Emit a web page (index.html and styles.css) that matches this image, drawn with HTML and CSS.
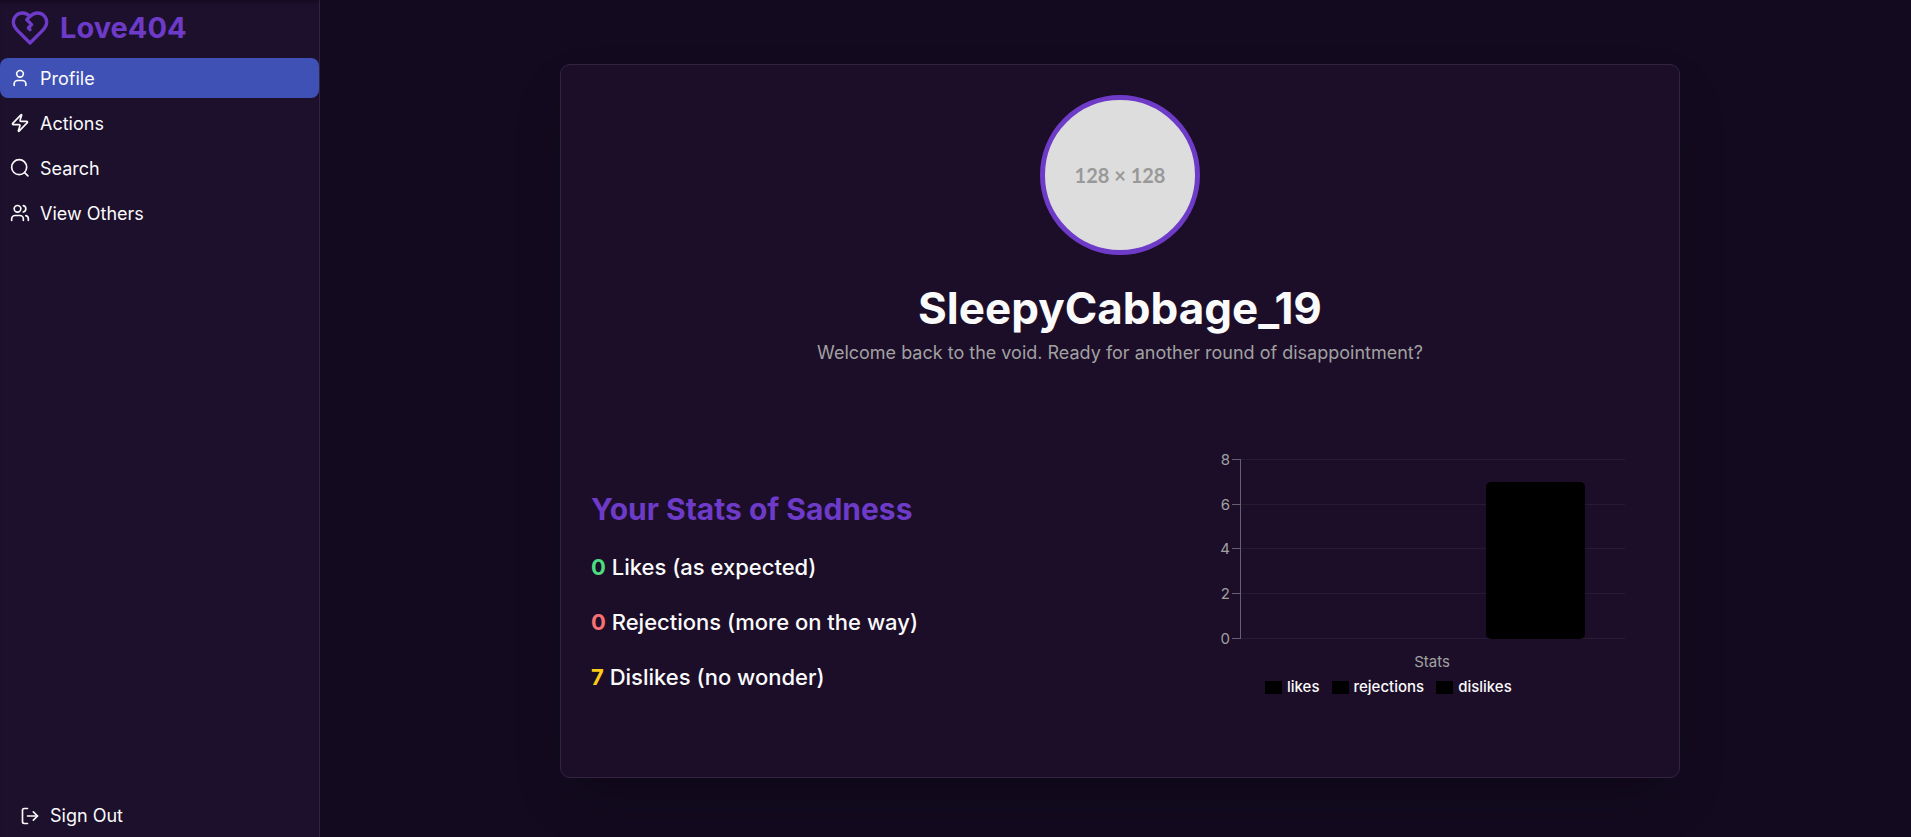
FILE: index.html
```html
<!DOCTYPE html>
<html lang="en">
<head>
<meta charset="utf-8">
<title>Love404</title>
<link rel="stylesheet" href="styles.css">
</head>
<body>
<div class="app">
  <aside class="sidebar">
    <div class="brand">
      <svg class="brand-icon" viewBox="0 0 24 24" aria-hidden="true"><path d="M19 14c1.49-1.46 3-3.21 3-5.5A5.5 5.5 0 0 0 16.5 3c-1.76 0-3 .5-4.5 2-1.500-1.500-2.740-2-4.500-2A5.500 5.500 0 0 0 2 8.500c0 2.300 1.500 4.050 3 5.500l7 7Z"/><path d="m12 13-1-1 2-2-3-3 2-2"/></svg>
      <span class="brand-name">Love404</span>
    </div>
    <nav class="nav">
      <button class="nav-item active" type="button"><svg class="icon" viewBox="0 0 24 24" aria-hidden="true"><path d="M19 21v-2a4 4 0 0 0-4-4H9a4 4 0 0 0-4 4v2"/><circle cx="12" cy="7" r="4"/></svg><span>Profile</span></button>
      <button class="nav-item" type="button"><svg class="icon" viewBox="0 0 24 24" aria-hidden="true"><path d="M4 14a1 1 0 0 1-.78-1.630l9.900-10.200a.5.5 0 0 1 .86.460l-1.920 6.020A1 1 0 0 0 13 10h7a1 1 0 0 1 .78 1.630l-9.900 10.200a.5.5 0 0 1-.86-.46l1.920-6.020A1 1 0 0 0 11 14z"/></svg><span>Actions</span></button>
      <button class="nav-item" type="button"><svg class="icon" viewBox="0 0 24 24" aria-hidden="true"><circle cx="11" cy="11" r="9"/><path d="m17.500 17.500 4 4"/></svg><span>Search</span></button>
      <button class="nav-item" type="button"><svg class="icon" viewBox="0 0 24 24" aria-hidden="true"><path d="M16 21v-2a4 4 0 0 0-4-4H6a4 4 0 0 0-4 4v2"/><circle cx="9" cy="7" r="4"/><path d="M22 21v-2a4 4 0 0 0-3-3.870"/><path d="M16 3.130a4 4 0 0 1 0 7.750"/></svg><span>View Others</span></button>
    </nav>
    <div class="sidebar-footer">
      <button class="nav-item" type="button"><svg class="icon" viewBox="0 0 24 24" aria-hidden="true"><path d="M9 21H5a2 2 0 0 1-2-2V5a2 2 0 0 1 2-2h4"/><path d="m16 17 5-5-5-5"/><path d="M21 12H9"/></svg><span>Sign Out</span></button>
    </div>
  </aside>
  <main class="main">
    <section class="card">
      <header class="profile">
        <div class="avatar">128 × 128</div>
        <h1 class="username">SleepyCabbage_19</h1>
        <p class="welcome">Welcome back to the void. Ready for another round of disappointment?</p>
      </header>
      <div class="details">
        <div class="stats">
          <h2 class="stats-title">Your Stats of Sadness</h2>
          <p class="stat"><strong class="likes">0</strong> Likes (as expected)</p>
          <p class="stat"><strong class="rejections">0</strong> Rejections (more on the way)</p>
          <p class="stat"><strong class="dislikes">7</strong> Dislikes (no wonder)</p>
        </div>
        <figure class="chart">
          <svg class="plot" viewBox="0 0 424 226" role="img" aria-label="Stats by count">
            <g class="grid"><path d="M38 10.500H423M38 55.500H423M38 99.500H423M38 144.500H423M38 189.500H423"/></g>
            <g class="axis"><path d="M38.500 10V190M30 10.500h8M30 55.500h8M30 99.500h8M30 144.500h8M30 189.500h8"/></g>
            <rect x="284" y="33" width="99" height="157" rx="5"/>
            <g class="tick" text-anchor="end"><text x="28" y="16">8</text><text x="28" y="61">6</text><text x="28" y="105">4</text><text x="28" y="150">2</text><text x="28" y="195">0</text></g>
            <text class="tick" x="230" y="218" text-anchor="middle">Stats</text>
          </svg>
          <figcaption class="legend"><span class="key">likes</span><span class="key">rejections</span><span class="key">dislikes</span></figcaption>
        </figure>
      </div>
    </section>
  </main>
</div>
</body>
</html>
```
FILE: styles.css
```css
* { box-sizing: border-box; }
body { margin: 0; background: #130a1f; color: #fafafa; font-family: Inter, "Liberation Sans", sans-serif; }
h1, h2, p, figure { margin: 0; }
.app { display: flex; min-height: 100vh; }
.sidebar { display: flex; flex-direction: column; width: 320px; flex-shrink: 0; background: #1d102d; border-right: 1px solid #32243f; box-shadow: inset 0 6px 6px -6px rgba(0, 0, 0, .6); }
.brand { display: flex; align-items: center; gap: 10px; padding: 7px 10px 9px; height: 58px; color: #6d3bc8; }
.brand-icon { width: 40px; height: 40px; fill: none; stroke: currentColor; stroke-width: 2; stroke-linecap: round; stroke-linejoin: round; }
.brand-name { font-size: 29px; line-height: 40px; font-weight: 700; }
.nav { display: flex; flex-direction: column; gap: 5px; }
.nav-item { display: flex; align-items: center; gap: 10px; width: 100%; height: 40px; padding: 0 10px; border: 0; border-radius: 8px; background: none; color: inherit; font: 400 18px/26px Inter, "Liberation Sans", sans-serif; text-align: left; }
.nav .nav-item span { padding-top: 2px; }
.nav-item.active { background: #3f51b5; }
.icon { width: 20px; height: 20px; fill: none; stroke: currentColor; stroke-width: 2; stroke-linecap: round; stroke-linejoin: round; }
.sidebar-footer { margin-top: auto; padding: 0 10px 1px; }
.main { flex: 1; display: flex; justify-content: center; align-items: flex-start; padding: 64px 0 58px 9px; }
.card { width: 100%; max-width: 1120px; padding: 30px; border: 1px solid #32243f; border-radius: 10px; background: #1c0e29; box-shadow: 0 25px 50px -12px rgba(0, 0, 0, .25); }
.profile { display: flex; flex-direction: column; align-items: center; }
.avatar { display: grid; place-items: center; width: 160px; height: 160px; border: 5px solid #6d3bc8; border-radius: 50%; background: #ddd; color: #999; font: 700 20px/24px Lato, sans-serif; }
.username { margin-top: 28px; font-size: 44px; line-height: 50px; font-weight: 700; }
.welcome { margin-top: 6px; color: #a1a1a1; font-size: 18px; line-height: 28px; }
.details { display: grid; grid-template-columns: 1fr 1fr; gap: 40px; align-items: start; margin-top: 82px; padding-bottom: 49px; }
.stats { display: flex; flex-direction: column; gap: 20px; padding-top: 40px; }
.stats-title { color: #6d3bc8; font-size: 30px; line-height: 41px; font-weight: 700; }
.stat { font-size: 22px; line-height: 35px; font-weight: 500; }
.stat strong { font-weight: 700; }
.likes { color: #4ade80; }
.rejections { color: #f87171; }
.dislikes { color: #facc15; }
.chart { width: 424px; margin: 0 23px 0 auto; }
.plot { display: block; width: 100%; }
.grid, .axis { fill: none; }
.grid { stroke: #281a35; }
.axis { stroke: #69606f; }
.tick { fill: #a1a1a1; font-size: 15px; }
.legend { display: flex; gap: 12px; margin-top: 1px; padding-left: 63px; font-size: 15px; line-height: 22px; font-weight: 500; }
.key { display: flex; align-items: center; gap: 5px; }
.key::before { content: ""; width: 17px; height: 13px; background: #000; }
```
